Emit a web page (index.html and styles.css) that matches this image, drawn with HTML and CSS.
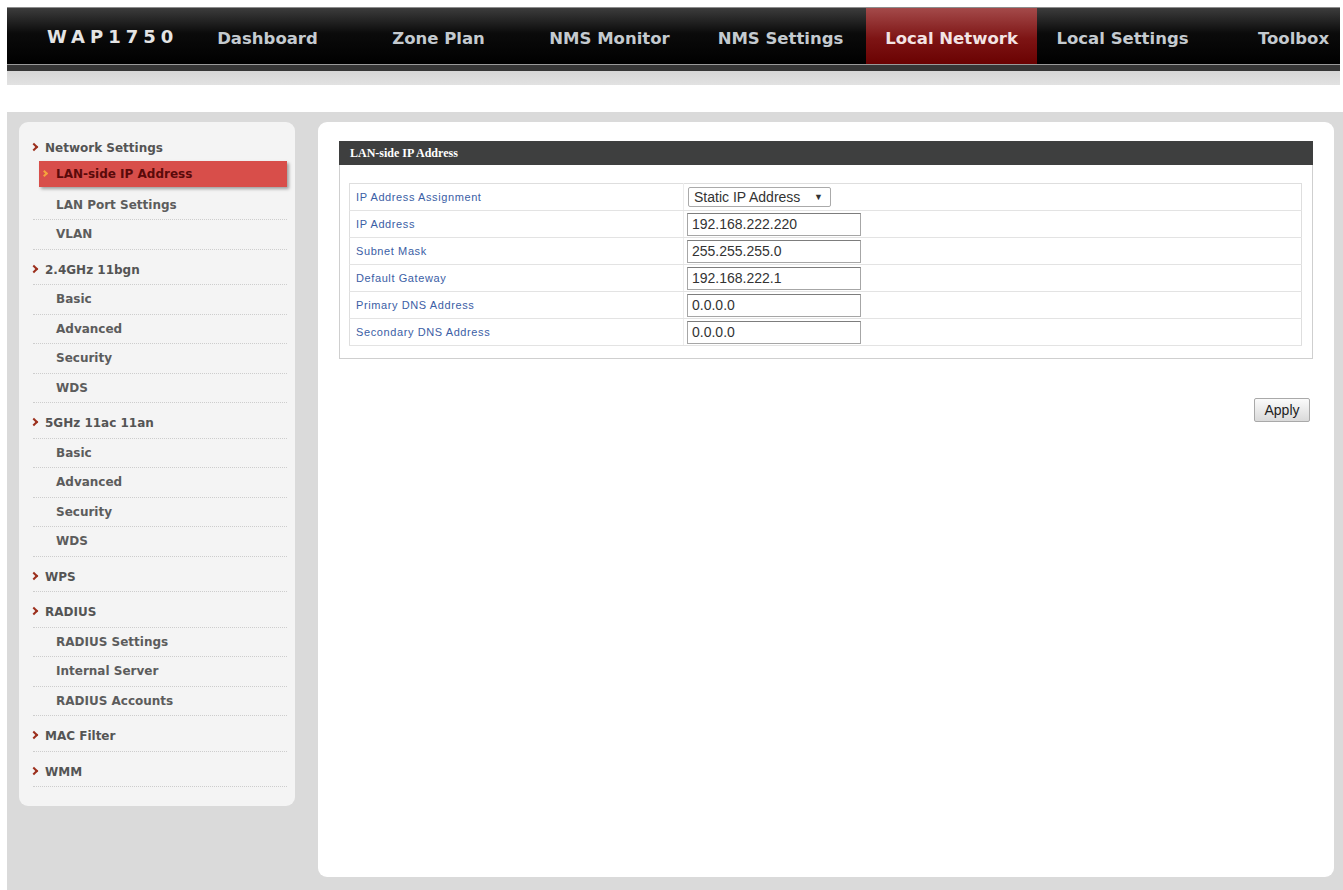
FILE: index.html
```html
<!DOCTYPE html>
<html lang="en">
    <head>
        <meta charset="UTF-8" />
        <meta name="viewport" content="width=device-width, initial-scale=1.0" />
        <title>WAP1750 - LAN-side IP Address</title>
        <link rel="stylesheet" href="styles.css">
    </head>

    <body>
        <header class="topbar">
            <div class="brand">WAP1750</div>
            <nav class="mainnav">
                <a class="tab">Dashboard</a>
                <a class="tab">Zone Plan</a>
                <a class="tab">NMS Monitor</a>
                <a class="tab">NMS Settings</a>
                <a class="tab tab-active">Local Network</a>
                <a class="tab">Local Settings</a>
                <a class="tab">Toolbox</a>
            </nav>
        </header>
        <div class="topbar-edge"></div>
        <div class="topbar-shade"></div>

        <main class="workspace">
            <aside class="sidebar">
                <ul class="menu">
                    <li class="menu-head first">Network Settings</li>
                    <li class="menu-item active">LAN-side IP Address</li>
                    <li class="menu-item">LAN Port Settings</li>
                    <li class="menu-item">VLAN</li>

                    <li class="menu-head">2.4GHz 11bgn</li>
                    <li class="menu-item">Basic</li>
                    <li class="menu-item">Advanced</li>
                    <li class="menu-item">Security</li>
                    <li class="menu-item">WDS</li>

                    <li class="menu-head">5GHz 11ac 11an</li>
                    <li class="menu-item">Basic</li>
                    <li class="menu-item">Advanced</li>
                    <li class="menu-item">Security</li>
                    <li class="menu-item">WDS</li>

                    <li class="menu-head">WPS</li>

                    <li class="menu-head">RADIUS</li>
                    <li class="menu-item">RADIUS Settings</li>
                    <li class="menu-item">Internal Server</li>
                    <li class="menu-item">RADIUS Accounts</li>

                    <li class="menu-head">MAC Filter</li>
                    <li class="menu-head">WMM</li>
                </ul>
            </aside>

            <section class="panel">
                <div class="panel-title">LAN-side IP Address</div>
                <div class="panel-body">
                    <table class="form-table">
                        <tr>
                            <td class="label">IP Address Assignment</td>
                            <td class="value">
                                <div class="fake-select">Static IP Address <span class="caret">&#9660;</span></div>
                            </td>
                        </tr>
                        <tr>
                            <td class="label">IP Address</td>
                            <td class="value"><input class="field" type="text" value="192.168.222.220"></td>
                        </tr>
                        <tr>
                            <td class="label">Subnet Mask</td>
                            <td class="value"><input class="field" type="text" value="255.255.255.0"></td>
                        </tr>
                        <tr>
                            <td class="label">Default Gateway</td>
                            <td class="value"><input class="field" type="text" value="192.168.222.1"></td>
                        </tr>
                        <tr>
                            <td class="label">Primary DNS Address</td>
                            <td class="value"><input class="field" type="text" value="0.0.0.0"></td>
                        </tr>
                        <tr>
                            <td class="label">Secondary DNS Address</td>
                            <td class="value"><input class="field" type="text" value="0.0.0.0"></td>
                        </tr>
                    </table>
                </div>
                <div class="actions">
                    <button class="btn" type="button">Apply</button>
                </div>
            </section>
        </main>
    </body>
</html>
```

FILE: styles.css
```css
body {
    margin: 0;
    background: #fff;
    font-family: 'Liberation Sans', Arial, sans-serif;
}

/* top navigation bar */
.topbar {
    margin: 7px 3px 0 7px;
    height: 57px;
    border-top: 1px solid #8c8c8c;
    box-sizing: border-box;
    background: linear-gradient(#3c3c3c, #0b0b0b 45%, #000);
    display: flex;
    overflow: hidden;
}

.brand {
    flex: 0 0 175px;
    box-sizing: border-box;
    padding: 4px 0 0 40px;
    line-height: 50px;
    font-family: 'DejaVu Sans', sans-serif;
    font-weight: bold;
    font-size: 18px;
    letter-spacing: 5px;
    color: #e4e4e4;
}

.mainnav {
    display: flex;
}

.tab {
    flex: 0 0 171px;
    box-sizing: border-box;
    padding-top: 6px;
    line-height: 50px;
    text-align: center;
    font-family: 'DejaVu Sans', sans-serif;
    font-weight: bold;
    font-size: 16.5px;
    color: #c4cacf;
    white-space: nowrap;
}

.tab-active {
    background: linear-gradient(#a44a4a, #7d1414 55%, #6a0202);
    color: #f3e4e4;
}

.topbar-edge {
    margin: 0 3px 0 7px;
    height: 7px;
    box-sizing: border-box;
    border-top: 1px solid #9a9a9a;
    background: #363636;
}

.topbar-shade {
    margin: 0 3px 27px 7px;
    height: 14px;
    background: linear-gradient(#d6d6d6, #e2e2e2);
}

/* work area */
.workspace {
    margin-left: 7px;
    height: 778px;
    box-sizing: border-box;
    padding: 10px 9px 0 12px;
    background: #dadada;
    display: flex;
    align-items: flex-start;
    gap: 23px;
    overflow: hidden;
}

.sidebar {
    flex: 0 0 276px;
    box-sizing: border-box;
    padding: 6px 8px 19px 14px;
    background: #f4f4f4;
    border-radius: 9px;
}

.menu {
    list-style: none;
    margin: 0;
    padding: 0;
    font-family: 'DejaVu Sans', sans-serif;
    font-weight: bold;
    font-size: 12px;
}

.menu li {
    position: relative;
    height: 28.5px;
    line-height: 28.5px;
    border-bottom: 1px dotted #cdcdcd;
    white-space: nowrap;
}

.menu-head {
    margin-top: 6px;
    padding-left: 12px;
    color: #545454;
}

.menu-head::before {
    content: '';
    position: absolute;
    left: -2px;
    top: 50%;
    margin-top: -4px;
    width: 4px;
    height: 4px;
    border-top: 2.5px solid #9c2f1c;
    border-right: 2.5px solid #9c2f1c;
    transform: rotate(45deg);
}

.menu-head.first {
    border-bottom: 0;
}

.menu-item {
    padding-left: 23px;
    color: #5c5c5c;
}

.menu .active {
    margin: -1.5px 0 3.5px 6px;
    height: 26px;
    line-height: 26px;
    padding-left: 17px;
    border-bottom: 0;
    background: #d84e4a;
    color: #5a0a0a;
    box-shadow: 2px 2px 3px rgba(0, 0, 0, 0.35);
}

.menu .active::before {
    content: '';
    position: absolute;
    left: 3px;
    top: 50%;
    margin-top: -3px;
    width: 3px;
    height: 3px;
    border-top: 2px solid #f5a43c;
    border-right: 2px solid #f5a43c;
    transform: rotate(45deg);
}

/* main panel */
.panel {
    flex: 1;
    height: 755px;
    box-sizing: border-box;
    padding: 19px 21px 0 21px;
    background: #fff;
    border-radius: 9px;
}

.panel-title {
    height: 24px;
    line-height: 24px;
    padding-left: 11px;
    background: #3e3f3f;
    color: #fff;
    font-family: 'Liberation Serif', 'Times New Roman', serif;
    font-weight: bold;
    font-size: 12px;
}

.panel-body {
    border: 1px solid #cfcfcf;
    border-top: 0;
    padding: 18px 10px 12px 9px;
}

.form-table {
    width: 100%;
    border-collapse: collapse;
    border: 1px solid #dedede;
}

.form-table tr {
    height: 27px;
}

.form-table td {
    border-bottom: 1px solid #e3e3e3;
    padding: 0;
}

.form-table .label {
    width: 334px;
    padding-left: 6px;
    box-sizing: border-box;
    color: #3b5ea5;
    font-size: 11px;
    letter-spacing: 0.6px;
}

.form-table .value {
    padding-left: 3px;
    border-left: 1px solid #ececec;
}

.field {
    display: block;
    width: 174px;
    height: 23px;
    box-sizing: border-box;
    margin: 0;
    padding: 0 4px;
    border: 1px solid #a6a6a6;
    border-top-color: #7d7d7d;
    font-family: 'Liberation Sans', Arial, sans-serif;
    font-size: 14px;
    color: #333;
}

.fake-select {
    width: 143px;
    height: 20px;
    box-sizing: border-box;
    margin-left: 1px;
    padding: 0 7px 0 5px;
    border: 1px solid #aaa;
    border-radius: 2px;
    line-height: 18px;
    font-size: 14px;
    color: #333;
    display: flex;
    justify-content: space-between;
}

.caret {
    font-size: 9px;
}

.actions {
    margin-top: 39px;
    padding-right: 3px;
    text-align: right;
}

.btn {
    width: 56px;
    height: 24px;
    padding: 0;
    border: 1px solid #a9a9a9;
    border-radius: 2px;
    background: linear-gradient(#fbfbfb, #dadada);
    font-family: 'Liberation Sans', Arial, sans-serif;
    font-size: 14px;
    color: #222;
}
```
